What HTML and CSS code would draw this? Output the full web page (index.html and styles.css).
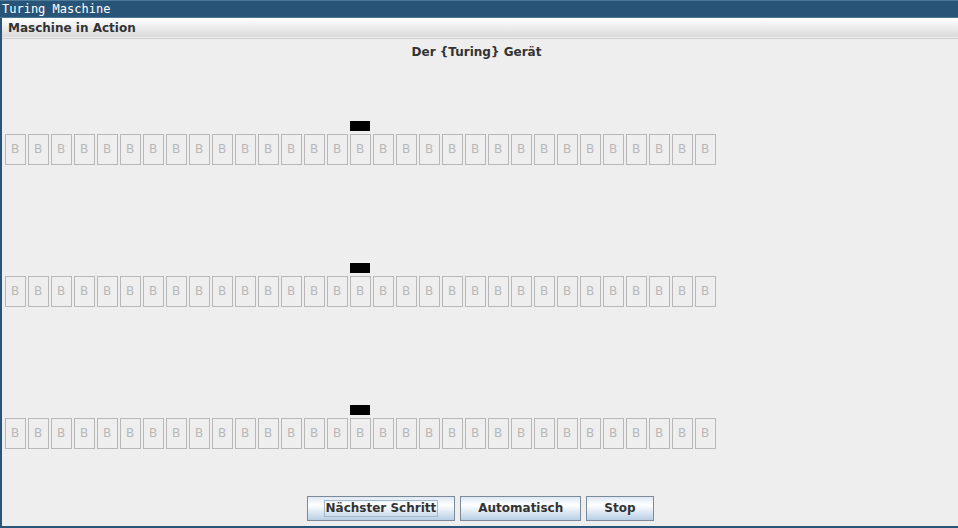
FILE: index.html
```html
<!DOCTYPE html>
<html lang="de">
<head>
<meta charset="utf-8">
<title>Turing Maschine</title>
<link rel="stylesheet" href="styles.css">
</head>
<body>
<div class="window">
  <header class="titlebar">Turing Maschine</header>
  <nav class="menubar"><button type="button" class="menu">Maschine in Action</button></nav>
  <main class="content">
    <h1 class="heading">Der {Turing} Gerät</h1>
    <section class="tapes">
      <div class="tape"></div>
      <div class="tape"></div>
      <div class="tape"></div>
    </section>
    <footer class="actions">
      <button type="button" class="action focused"><span class="label">Nächster Schritt</span></button>
      <button type="button" class="action"><span class="label">Automatisch</span></button>
      <button type="button" class="action"><span class="label">Stop</span></button>
    </footer>
  </main>
</div>
<script src="tapes.js"></script>
</body>
</html>
```
FILE: tapes.js
```js
// Each tape holds 31 blank cells, with the head over the middle one.
const CELLS = 31;
const HEAD = 15;

document.querySelectorAll('.tape').forEach((tape) => {
  for (let i = 0; i < CELLS; i++) {
    const slot = document.createElement('div');
    slot.className = i === HEAD ? 'slot head' : 'slot';
    const cell = document.createElement('button');
    cell.type = 'button';
    cell.className = 'cell';
    cell.disabled = true;
    cell.textContent = 'B';
    slot.append(cell);
    tape.append(slot);
  }
});
```
FILE: styles.css
```css
* {
  box-sizing: border-box;
}

body {
  margin: 0;
  background: #eeeeee;
  color: #333333;
  font: bold 12px/16px "DejaVu Sans", sans-serif;
}

button {
  margin: 0;
  color: inherit;
  font: inherit;
}

.window {
  display: flex;
  flex-direction: column;
  min-height: 100vh;
  border-left: 2px solid #285577;
  border-bottom: 2px solid #285577;
}

.titlebar {
  height: 18px;
  margin-left: -2px;
  padding-left: 2px;
  border-top: 1px solid #4c7899;
  border-bottom: 1px solid #4c7899;
  background: #285577;
  color: #ffffff;
  font: 12px/16px "DejaVu Sans Mono", monospace;
}

.menubar {
  display: flex;
  height: 21px;
  border-bottom: 1px solid #cccccc;
  background: linear-gradient(#ffffff, #dadada 19px, #eeeeee 19px);
}

.menu {
  padding: 0 6px;
  border: 0;
  background: none;
  font-size: 12px;
}

.content {
  display: flex;
  flex: 1;
  flex-direction: column;
}

.heading {
  margin: 0;
  padding: 5px 7px 5px 0;
  font-size: 12px;
  line-height: 16px;
  text-align: center;
}

.tapes {
  display: grid;
  flex: 1;
  grid-auto-rows: 1fr;
}

.tape {
  display: flex;
  align-items: center;
  gap: 2px;
  padding: 14px 3px 0;
}

.slot {
  flex: none;
  width: 21px;
}

.slot::before {
  content: "";
  display: block;
  width: 20px;
  height: 10px;
  margin-bottom: 3px;
}

.head::before {
  background: #000000;
}

.cell {
  display: block;
  width: 100%;
  height: 31px;
  padding: 0 1px 1px 0;
  border: 1px solid #b8b8b8;
  background: #eeeeee;
  color: #b8b8b8;
  font-weight: normal;
}

.actions {
  display: flex;
  justify-content: center;
  gap: 5px;
  padding: 5px;
}

.action {
  height: 25px;
  padding: 0 16px;
  border: 1px solid #7a8a99;
  background: linear-gradient(#dde8f3, #ffffff 35%, #b8cfe5);
}

.label {
  display: block;
  height: 17px;
  border: 1px solid transparent;
  line-height: 15px;
}

.focused .label {
  padding: 0 1px;
  border-color: #a3b8cc;
}
```
